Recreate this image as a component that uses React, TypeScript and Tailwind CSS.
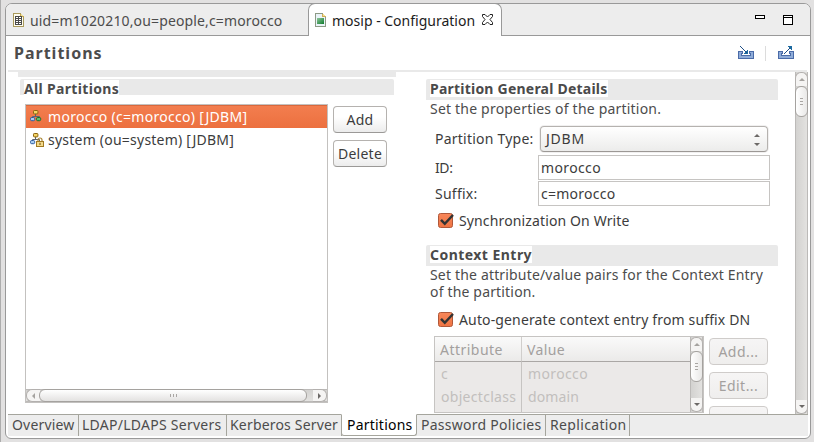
import type { ReactNode } from "react";

function FileTableIcon() {
  return (
    <svg className="block shrink-0" width="12" height="14" viewBox="0 0 12 14" shapeRendering="crispEdges">
      <path d="M0.5 .5H7.5L10.5 3.5V13.5H.5Z" fill="#fffdf0" stroke="#a99a5c" />
      <path d="M7.5 0.5V3.5H10.5" fill="#efdf9a" stroke="#c4a850" />
      <rect x="2" y="3" width="7" height="9" fill="#4a4a4a" />
      <path d="M3 4h2v1H3zM6 4h2v1H6zM3 6h2v1H3zM6 6h2v1H6zM3 8h2v1H3zM6 8h2v1H6zM3 10h2v1H3zM6 10h2v1H6z" fill="#fff" />
    </svg>
  );
}

function ConfigIcon() {
  return (
    <svg className="block shrink-0" width="12" height="14" viewBox="0 0 12 14" shapeRendering="crispEdges">
      <defs>
        <linearGradient id="cfg" x1="0" y1="0" x2="1" y2="1">
          <stop offset="0" stopColor="#8fc79b" />
          <stop offset="1" stopColor="#0d7a2c" />
        </linearGradient>
      </defs>
      <path d="M.5 .5H7.5L10.5 3.5V13.5H.5Z" fill="#eaf3f8" stroke="#8d9a86" />
      <path d="M7.5 .5V3.5H10.5" fill="#f3dc92" stroke="#cfae55" />
      <rect x="2" y="5" width="7" height="6" fill="url(#cfg)" />
    </svg>
  );
}

function TreeIcon({ locked = false }: { locked?: boolean }) {
  return (
    <svg className="block shrink-0" width="15" height="15" viewBox="0 0 15 15">
      <path d="M5.5 5V7.5M2.5 9.5V7.5H9.5V9.5" fill="none" stroke="#5b6470" />
      <rect x="3.5" y="1.5" width="4.4" height="3.4" rx=".8" fill="#f4d465" stroke="#8c6510" />
      <rect x=".5" y="8.5" width="4.2" height="3.2" rx="1.2" fill="#a9cdf2" stroke="#2c5a9e" />
      {locked ? (
        <>
          <path d="M8 9.5V8A2 2 0 0 1 12 8V9.5" fill="none" stroke="#a88432" strokeWidth="1.2" />
          <rect x="6.5" y="9.5" width="7" height="5" fill="#f3d98a" stroke="#a17a22" />
          <path d="M10 10.8V13" stroke="#6b4c0c" />
        </>
      ) : (
        <rect x="6.5" y="8.5" width="4.2" height="3.2" rx="1.2" fill="#5cc06c" stroke="#176b2d" />
      )}
    </svg>
  );
}

function TrayIcon({ out = false }: { out?: boolean }) {
  return (
    <svg className="block" width="16" height="14" viewBox="0 0 16 14" shapeRendering="crispEdges">
      <path d="M.5 5.5H4.5V7.5H3.5V9.5H12.5V7.5H11.5V5.5H15.5V12.5H.5Z" fill="#8facd8" stroke="#4a6ba8" />
      {out ? (
        <g fill="#1f4f86">
          <path d="M10 0h4v4h-1v-1h-1v-1h-1v-1h-1z" fill="#1c6aa0" />
          <path d="M6 7h1v1H6zM7 6h1v1H7zM8 5h1v1H8zM9 4h1v1H9zM10 3h1v1h-1zM11 2h1v1h-1z" />
        </g>
      ) : (
        <g fill="#1f4f86">
          <path d="M9 4h1v4H6v-1h1v-1h1v-1h1z" fill="#1c6aa0" />
          <path d="M2 0h1v1H2zM3 1h1v1H3zM4 2h1v1H4zM5 3h1v1H5zM6 4h1v1H6zM7 5h1v1H7zM8 6h1v1H8z" />
        </g>
      )}
    </svg>
  );
}

function CloseIcon() {
  return (
    <svg className="block shrink-0" width="11" height="11" viewBox="0 0 11 11">
      <path d="M.5 .5H3L5.5 3 8 .5H10.5V2.5L8 5.5 10.5 8.5V10.5H8L5.5 8 3 10.5H.5V8.5L3 5.5 .5 2.5Z" fill="#fff" stroke="#222" />
    </svg>
  );
}

function Check({ label, track }: { label: string; track: string }) {
  return (
    <div className="flex h-4 items-center">
      <svg className="block shrink-0" width="17" height="16" viewBox="0 0 17 16">
        <defs>
          <linearGradient id="chk" x1="0" y1="0" x2="0" y2="1">
            <stop offset="0" stopColor="#f8875a" />
            <stop offset="1" stopColor="#ee7443" />
          </linearGradient>
        </defs>
        <rect x=".5" y=".5" width="14" height="14" rx="2" fill="url(#chk)" stroke="#b0583a" />
        <path d="M3 6.8L6.8 10.8 15 2" fill="none" stroke="#333" strokeWidth="2.5" />
      </svg>
      <span className={`ml-1 pb-[2px] text-[#3c3c3c] ${track}`}>{label}</span>
    </div>
  );
}

function Button({ children, disabled = false }: { children: ReactNode; disabled?: boolean }) {
  return (
    <button
      className={`flex h-[27px] w-full shrink-0 items-center justify-center rounded-[4px] border pb-px ${
        disabled
          ? "border-[#cfccca] bg-linear-to-b from-[#f6f5f5] to-[#efeeed] tracking-[0.45px] text-[#a3a09e]"
          : "border-[#b5b2af] border-b-[#9b9997] bg-linear-to-b from-white from-40% to-[#ececec] tracking-[0.26px] text-[#3c3c3c]"
      }`}
    >
      {children}
    </button>
  );
}

function VerticalBar({ height, downColor }: { height: string; downColor: string }) {
  return (
    <div className={`flex w-[13px] shrink-0 flex-col border-x border-[#bcbab8] bg-linear-to-r from-[#d3d2d0] to-[#e3e2e0] ${height}`}>
      <div className="-mx-px flex h-[14px] items-center justify-center rounded-t-[6px] border border-b-0 border-[#b3b0ae] bg-[#f5f4f3]">
        <div className="size-0 border-x-[3px] border-b-[3px] border-x-transparent border-b-[#a6a3a0]" />
      </div>
      <div className="-mx-px flex h-[31px] flex-col items-center justify-center gap-[2px] rounded-[6px] border border-[#a5a29f] bg-linear-to-r from-white to-[#e9e8e7]">
        <div className="h-px w-[3px] bg-[#a9a6a3]" />
        <div className="h-px w-[3px] bg-[#a9a6a3]" />
        <div className="h-px w-[3px] bg-[#a9a6a3]" />
      </div>
      <div className="-mx-px mt-auto flex h-[14px] items-center justify-center rounded-b-[6px] border border-t-0 border-[#b3b0ae] bg-[#f5f4f3]">
        <div className={`size-0 border-x-[3px] border-t-[3px] border-x-transparent ${downColor}`} />
      </div>
    </div>
  );
}

function Section({ title, w }: { title: string; w: string }) {
  return (
    <div className="h-[21px] rounded-t-[2px] bg-[#e9e9e9] pt-px pl-1">
      <div className={`h-[17px] bg-white font-bold leading-[17px] whitespace-nowrap text-[#4a4a4a] ${w}`}>{title}</div>
    </div>
  );
}

const bottomTabs = [
  { label: "Overview", cls: "w-[71px] pl-[4px] tracking-[0.18px]" },
  { label: "LDAP/LDAPS Servers", cls: "w-[148px] pl-[3px] tracking-[0.26px]" },
  { label: "Kerberos Server", cls: "w-[115px] pl-[3px] tracking-[0.18px]" },
  { label: "Partitions", active: true, cls: "w-[76px] pl-[5px] tracking-[0.22px]" },
  { label: "Password Policies", cls: "w-[129px] pl-[4px] tracking-[0.26px]" },
  { label: "Replication", cls: "w-[84px] pl-[4px] tracking-[0.34px]" },
];

export default function App() {
  return (
    <div className="flex h-[442px] w-[814px] overflow-hidden border-l border-[#adadad] bg-[#e2e1e1] pt-[3px] pl-1 font-['Noto_Sans','Open_Sans',sans-serif] text-[14px] leading-[17px] text-[#4c4c4c]">
      <div className="flex h-[436px] w-[806px] shrink-0 flex-col overflow-hidden rounded-t-[7px] rounded-b-[6px] border border-[#999] bg-white">
        {/* Editor tabs */}
        <div className="flex h-8 shrink-0">
          <div className="flex w-[302px] items-center border-b border-[#999] bg-[#ededed] pl-[7px] tracking-[0.14px] whitespace-nowrap">
            <FileTableIcon />
            <span className="ml-[5px] pt-px">uid=m1020210,ou=people,c=morocco</span>
          </div>
          <div className="bg-[#ededed]">
            <div className="-mt-px flex h-[33px] w-[194px] items-center rounded-t-[7px] border border-b-0 border-[#999] bg-white pl-1.5 whitespace-nowrap text-[#1c1c1c]">
              <ConfigIcon />
              <span className="ml-[5px]">mosip - Configuration</span>
              <span className="ml-[7px] pb-px">
                <CloseIcon />
              </span>
            </div>
          </div>
          <div className="flex flex-1 items-start justify-end border-b border-[#999] bg-[#ededed] pt-[11px] pr-[17px]">
            <div className="h-1 w-[10px] border border-black bg-white" />
            <div className="ml-[18px] h-[10px] w-[10px] border border-black bg-white pt-px">
              <div className="h-px bg-black" />
            </div>
          </div>
        </div>

        {/* Form heading */}
        <div className="flex h-[34px] shrink-0 items-center pr-4 pl-2">
          <h1 className="text-[16px] font-bold tracking-[1px]">Partitions</h1>
          <div className="ml-auto flex items-center">
            <TrayIcon />
            <div className="mr-[12px] ml-[11px] h-[15px] w-px bg-[#dcdcdc]" />
            <TrayIcon out />
          </div>
        </div>
        <div className="mr-[3px] ml-[2px] h-0.5 shrink-0 bg-[#e9e9e9]" />

        {/* Form body */}
        <div className="flex h-[342px] shrink-0 overflow-hidden pl-3">
          <div className="flex w-[378px] shrink-0 flex-col">
            <div className="h-[5px] shrink-0 bg-[#e9e9e9]" />
            <div className="mt-[2px] ml-0.5 h-4 w-[374px] rounded-t-[2px] bg-[#e9e9e9] pt-px pl-1">
              <div className="h-[15px] w-[95px] bg-white leading-[17px] font-bold tracking-[0.33px] whitespace-nowrap">All Partitions</div>
            </div>
            <div className="mt-[9px] flex pl-[7px]">
              <div className="flex h-[299px] w-[303px] flex-col border border-[#c3c1bf] bg-white">
                <div className="flex h-[23px] items-center bg-linear-to-b from-[#f37e4f] to-[#ec703f] pl-1 tracking-[0.3px] text-white shadow-[inset_0_1px_0_#d9683c]">
                  <TreeIcon />
                  <span className="ml-[3px]">morocco (c=morocco) [JDBM]</span>
                </div>
                <div className="flex h-[23px] items-center pl-1 tracking-[0.23px] text-[#3c3c3c]">
                  <TreeIcon locked />
                  <span className="ml-[3px]">system (ou=system) [JDBM]</span>
                </div>
                <div className="mt-auto flex h-[13px] border-y border-[#bcbab8] bg-linear-to-b from-[#d3d2d0] to-[#e3e2e0]">
                  <div className="-my-px flex w-[14px] items-center justify-center rounded-l-[6px] border border-r-0 border-[#b3b0ae] bg-[#f5f4f3]">
                    <div className="size-0 border-y-[3px] border-r-[3px] border-y-transparent border-r-[#a6a3a0]" />
                  </div>
                  <div className="-my-px -ml-px flex w-[268px] items-center justify-center gap-[2px] rounded-[6px] border border-[#a5a29f] bg-linear-to-b from-white to-[#e3e2e1]">
                    <div className="h-[3px] w-px bg-[#a9a6a3]" />
                    <div className="h-[3px] w-px bg-[#a9a6a3]" />
                    <div className="h-[3px] w-px bg-[#a9a6a3]" />
                  </div>
                  <div className="-my-px ml-auto flex w-[14px] items-center justify-center rounded-r-[6px] border border-l-0 border-[#b3b0ae] bg-[#f5f4f3]">
                    <div className="size-0 border-y-[3px] border-l-[3px] border-y-transparent border-l-[#6c6967]" />
                  </div>
                </div>
              </div>
              <div className="ml-[5px] flex w-[54px] flex-col gap-[7px] pt-0.5">
                <Button>Add</Button>
                <Button>Delete</Button>
              </div>
            </div>
          </div>

          <div className="ml-[30px] w-[352px] shrink-0 pt-[7px] whitespace-nowrap">
            <Section title="Partition General Details" w="w-[178px] tracking-[0.22px]" />
            <p className="pl-1 tracking-[0.2px]">Set the properties of the partition.</p>
            <div className="mt-[9px] flex h-[26px] items-center pl-[9px] text-[#3c3c3c]">
              <span className="w-[105px] pb-px tracking-[0.23px]">Partition Type:</span>
              <div className="flex h-[26px] w-[228px] items-center rounded-[4px] border border-[#b5b2af] border-b-[#9c9895] bg-linear-to-b from-white to-[#ececeb] pr-[7px] pl-[5px] shadow-[0_0_0_1px_#f1f0f0]">
                <span className="pb-px tracking-[0.75px]">JDBM</span>
                <div className="ml-auto flex flex-col gap-[6px] pt-px">
                  <div className="size-0 border-x-[3px] border-b-[3px] border-x-transparent border-b-[#6c6967]" />
                  <div className="size-0 border-x-[3px] border-t-[3px] border-x-transparent border-t-[#6c6967]" />
                </div>
              </div>
            </div>
            <div className="mt-[3px] flex h-[25px] items-center pl-[9px] text-[#3c3c3c]">
              <span className="w-[103px] tracking-[-0.4px]">ID:</span>
              <div className="h-[25px] w-[232px] border border-[#c6c4c2] pl-0.5 leading-[24px] tracking-[0.37px]">morocco</div>
            </div>
            <div className="mt-px flex h-[25px] items-center pl-[9px] text-[#3c3c3c]">
              <span className="w-[103px] tracking-[0.25px]">Suffix:</span>
              <div className="h-[25px] w-[232px] border border-[#c6c4c2] pl-0.5 leading-[24px] tracking-[0.26px]">c=morocco</div>
            </div>
            <div className="mt-[7px] pl-3">
              <Check label="Synchronization On Write" track="tracking-[0.13px]" />
            </div>
            <div className="mt-4">
              <Section title="Context Entry" w="w-[102px] tracking-[0.46px]" />
            </div>
            <p className="w-[345px] pl-1 tracking-[0.17px] whitespace-normal">Set the attribute/value pairs for the Context Entry of the partition.</p>
            <div className="mt-3 pl-3">
              <Check label="Auto-generate context entry from suffix DN" track="tracking-[0.14px]" />
            </div>
            <div className="mt-2 flex pl-2">
              <div className="flex h-[77px] w-[270px] shrink-0 border border-[#c6c4c2] bg-[#ebe9e8]">
                <div className="grid flex-1 grid-cols-[87px_1fr] grid-rows-[25px_50px] text-[#c2bfbd]">
                  <div className="border-r border-b border-r-[#d0cecc] border-b-[#aaa7a5] bg-linear-to-b from-[#fafafa] to-[#ebeae9] pt-[4px] pl-[5px] tracking-[0.48px] text-[#a3a09e]">Attribute</div>
                  <div className="border-b border-b-[#aaa7a5] bg-linear-to-b from-[#fafafa] to-[#ebeae9] pt-[4px] pl-[5px] tracking-[0.37px] text-[#a3a09e]">Value</div>
                  <div className="border-r border-[#c6c4c2] pl-[6px] leading-[23px]">
                    <div>c</div>
                    <div className="tracking-[0.3px]">objectclass</div>
                  </div>
                  <div className="pl-[6px] leading-[23px]">
                    <div className="tracking-[0.37px]">morocco</div>
                    <div className="tracking-[0.12px]">domain</div>
                  </div>
                </div>
                <VerticalBar height="h-[75px]" downColor="border-t-[#6c6967]" />
              </div>
              <div className="ml-[5px] flex w-[59px] shrink-0 flex-col gap-[7px] pt-0.5">
                <Button disabled>Add...</Button>
                <Button disabled>Edit...</Button>
                <Button disabled>Delete</Button>
              </div>
            </div>
          </div>
          <div className="ml-[17px]">
            <VerticalBar height="h-[342px]" downColor="border-t-[#6c6967]" />
          </div>
        </div>

        {/* Page tabs */}
        <div className="mr-0.5 ml-[2px] flex h-[22px] shrink-0 bg-[#ededed]">
          {bottomTabs.map((t) => (
            <div
              key={t.label}
              className={`shrink-0 border-t border-r pt-[1px] whitespace-nowrap ${t.cls} ${
                t.active
                  ? "-ml-px rounded-b-[3px] border-b border-l border-x-[#a5a59d] border-t-white border-b-[#a5a59d] bg-white text-black"
                  : "border-[#a5a59d]"
              }`}
            >
              {t.label}
            </div>
          ))}
          <div className="flex-1 border-t border-[#a5a59d]" />
        </div>
      </div>
    </div>
  );
}
